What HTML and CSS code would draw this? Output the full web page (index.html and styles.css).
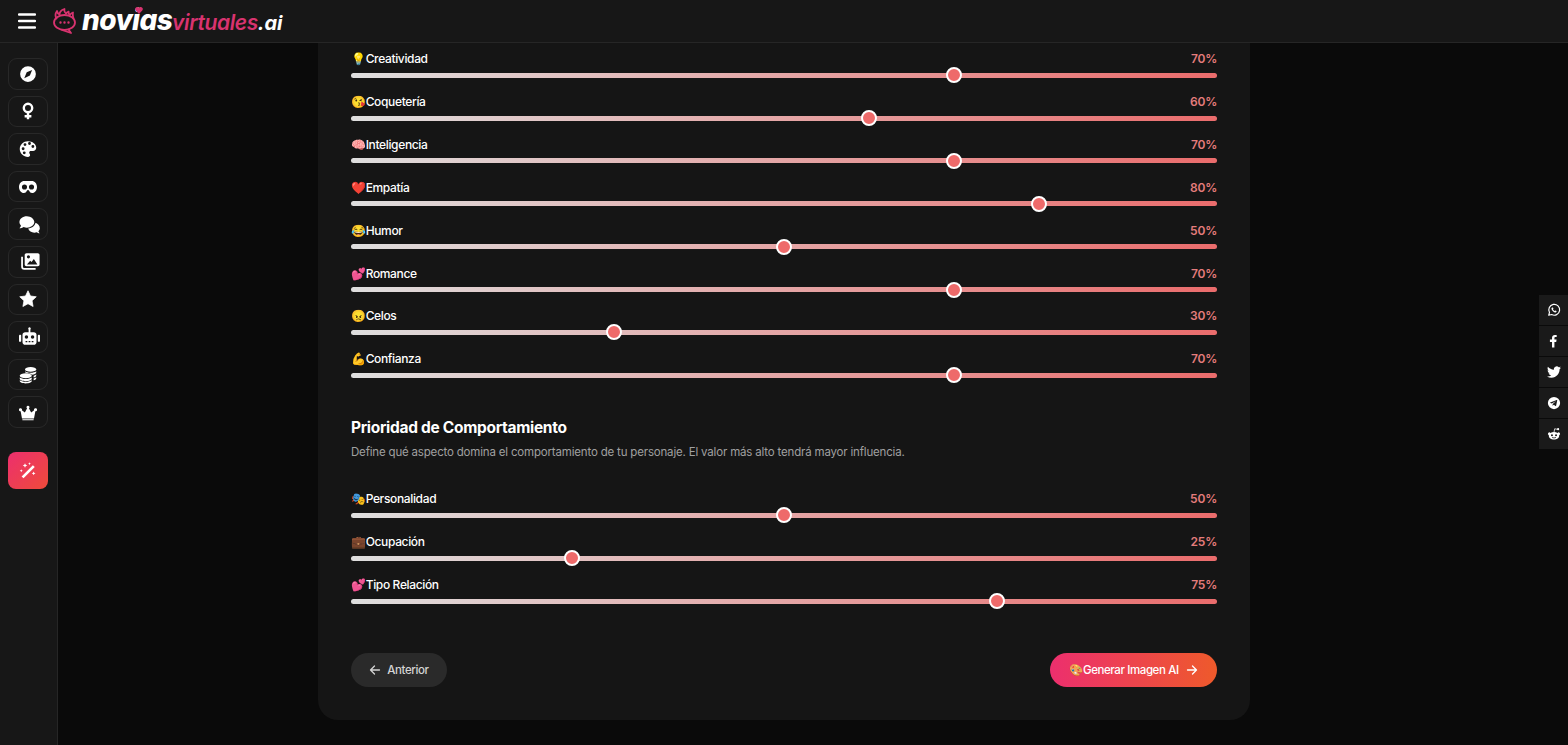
FILE: index.html
```html
<!doctype html>
<html lang="es">
  <head>
    <meta charset="UTF-8" />
    <meta name="viewport" content="width=device-width, initial-scale=1.0" />
    <title>Novias Virtuales AI</title>
    <link rel="stylesheet" href="styles.css">
  </head>
  <body>
    <header class="topbar">
      <button class="menu-btn" aria-label="Menú">
        <svg viewBox="0 0 18 16" width="18" height="16"><path d="M1 1.500h16M1 8h16M1 14.500h16" stroke="#fff" stroke-width="2.4" stroke-linecap="round"/></svg>
      </button>
      <a class="logo" href="#">
        <svg class="logo-mark" viewBox="0 0 26 26" width="26" height="26" fill="none" stroke="#d8336f" stroke-width="1.8" stroke-linejoin="round" stroke-linecap="round">
          <path d="M4.500 10.500C3 8 3.500 5 5 3c.3 2 1.200 3 2.500 3.500C7.500 4.500 9.500 2 12.500 1c-.5 2 .3 3.600 1.500 4.600.6-1 1.400-1.600 2.600-2-.2 1.400.3 2.400 1.200 3.400.8-1 1.900-2 3.200-2.500-.4 2-.2 3.700.5 5.700"/>
          <ellipse cx="12.500" cy="14.500" rx="10.500" ry="7.500"/>
          <path d="M10 22l9 3-2.500-3.500"/>
          <path d="M8.500 14.500h.01M12.500 14.500h.01M16.500 14.500h.01" stroke-width="2.400"/>
        </svg>
        <span class="logo-main">novias<svg class="logo-heart" viewBox="0 0 10 9" width="8" height="7"><path d="M5 9L.8 4.600C-.8 2.800.4 0 2.700 0 3.800 0 4.500.6 5 1.400 5.500.6 6.200 0 7.300 0c2.300 0 3.500 2.800 1.900 4.600z"/></svg></span><span class="logo-sub">virtuales</span><span class="logo-tld">.ai</span>
      </a>
    </header>

    <nav class="sidebar">
      <a class="nav-btn" href="#"><svg viewBox="0 0 24 24"><path fill-rule="evenodd" d="M12 1.500a10.500 10.500 0 1 0 0 21 10.500 10.500 0 0 0 0-21zM17.500 6.500l-3 7.500-7.500 3.500 3.300-7.700z"/></svg></a>
      <a class="nav-btn" href="#"><svg viewBox="0 0 24 24"><circle cx="12" cy="8" r="5.600" fill="none" stroke="#fff" stroke-width="3.200"/><path d="M12 14v9M7.500 19h9" stroke="#fff" stroke-width="3.200" fill="none"/></svg></a>
      <a class="nav-btn" href="#"><svg viewBox="0 0 24 24"><path fill-rule="evenodd" d="M12 1.500C6 1.500 1 6.200 1 12s5 10.500 11 10.500c1.800 0 2.800-1.100 2.800-2.500 0-1.800-1.200-2.200-1.200-3.500 0-1.200.9-2 2.100-2h3c2.400 0 4.300-1.900 4.300-4.300C23 5.300 18 1.500 12 1.500zM5.500 13.500a1.900 1.900 0 1 0 0-3.800 1.900 1.900 0 0 0 0 3.800zM8 8a1.900 1.900 0 1 0 0-3.800A1.900 1.900 0 0 0 8 8zM14 6.500a1.900 1.900 0 1 0 0-3.800 1.900 1.900 0 0 0 0 3.800zM18.500 10.500a1.900 1.900 0 1 0 0-3.800 1.900 1.900 0 0 0 0 3.800zM7 19a1.900 1.900 0 1 0 0-3.800A1.900 1.900 0 0 0 7 19z"/></svg></a>
      <a class="nav-btn" href="#"><svg viewBox="0 0 24 24"><path fill-rule="evenodd" d="M7 4h10c3.900 0 7 3.500 7 8s-3 8-6.300 8c-2.700 0-3.700-1.800-4.400-3.300-.5-1-2.100-1-2.600 0C10 18.200 9 20 6.300 20 3 20 0 16.500 0 12s3.100-8 7-8zM7.300 8.500a3.400 3.400 0 1 0 0 6.800 3.400 3.400 0 0 0 0-6.800zM16.700 8.500a3.400 3.400 0 1 0 0 6.800 3.400 3.400 0 0 0 0-6.800z"/></svg></a>
      <a class="nav-btn wide" href="#"><svg viewBox="0 0 24 24"><path d="M9 2.500C4.300 2.500.5 5.500.5 9.200c0 1.600.7 3 1.800 4.200-.4 1.300-1.300 2.300-1.800 2.900 1.800 0 3.500-.6 4.800-1.400 1.100.4 2.400.7 3.700.7 4.700 0 8.500-3 8.500-6.400S13.700 2.500 9 2.500z"/><path d="M18.800 9.500c0 3.800-3.800 6.800-8.300 7.100.9 2.800 3.700 4.700 7 4.700 1 0 1.800-.2 2.600-.4.900.6 2.200 1.100 3.600 1.100-.5-.5-1.200-1.400-1.500-2.400 1-.9 1.600-2.100 1.600-3.400 0-2.900-2.400-5.300-5.200-6.200z"/></svg></a>
      <a class="nav-btn wide" href="#"><svg viewBox="0 0 24 24"><path fill-rule="evenodd" d="M8.500 2.500h13c1.100 0 2 .9 2 2v11c0 1.100-.9 2-2 2h-13c-1.100 0-2-.9-2-2v-11c0-1.100.9-2 2-2zM9 15.500h12l-4-6.500-2.700 3.600-1.500-1.600zM10.800 8.500a1.800 1.800 0 1 0 0-3.600 1.800 1.800 0 0 0 0 3.600z"/><path d="M3.500 6.500V18c0 1.400 1.100 2.500 2.500 2.500h13" fill="none" stroke="#fff" stroke-width="2"/></svg></a>
      <a class="nav-btn" href="#"><svg viewBox="0 0 24 24"><path d="M12 1l3.300 7 7.700 1-5.600 5.300 1.400 7.700L12 18.300 5.200 22l1.400-7.700L1 9l7.700-1z" stroke="#fff" stroke-width="1" stroke-linejoin="round"/></svg></a>
      <a class="nav-btn wide" href="#"><svg viewBox="0 0 24 24"><path fill-rule="evenodd" d="M12 1.500a1.500 1.500 0 0 1 1 2.600V7h4c1.700 0 3 1.300 3 3v8.500c0 1.700-1.300 3-3 3H7c-1.700 0-3-1.300-3-3V10c0-1.700 1.300-3 3-3h4V4.100a1.500 1.500 0 0 1 1-2.600zM8.500 10.500a2 2 0 1 0 0 4 2 2 0 0 0 0-4zM15.500 10.500a2 2 0 1 0 0 4 2 2 0 0 0 0-4zM7.500 17v1.500h2V17zM11 17v1.500h2V17zM14.500 17v1.500h2V17z"/><rect x="0" y="10" width="2.500" height="8" rx="1"/><rect x="21.500" y="10" width="2.500" height="8" rx="1"/></svg></a>
      <a class="nav-btn" href="#"><svg viewBox="0 0 24 24"><ellipse cx="15.500" cy="4.500" rx="7.500" ry="3.200"/><path d="M23 7v1.500c0 1.500-2.500 2.800-5.800 3.100-1-.9-2.600-1.600-4.600-1.900C10 9.300 8 8.800 8 7.500V7c1.500 1.300 4.400 2 7.500 2S21.500 8.300 23 7zM23 11v1.500c0 1.300-1.600 2.300-3.500 2.900v-2.400c1.400-.3 2.700-.8 3.500-2zM23 15v1.300c0 1.200-1.300 2.200-3.500 2.700v-2.400c1.400-.3 2.700-.9 3.500-1.600z"/><ellipse cx="9" cy="13" rx="8" ry="3.300"/><path d="M1 15.300c1.500 1.200 4.500 2 8 2s6.500-.8 8-2V17c0 1.800-3.600 3.200-8 3.200S1 18.800 1 17z"/><path d="M1 19c1.500 1.200 4.500 2 8 2s6.500-.8 8-2v1c0 1.800-3.600 3.200-8 3.200S1 21.800 1 20z"/></svg></a>
      <a class="nav-btn" href="#"><svg viewBox="0 0 24 24"><path d="M12 3.500a2 2 0 0 1 1.200 3.600l3 5.400 4-2.800a2 2 0 1 1 1.600 1.200L20 20.500H4L2.200 10.900a2 2 0 1 1 1.600-1.200l4 2.800 3-5.400A2 2 0 0 1 12 3.500zM4.500 21.500h15V23h-15z"/></svg></a>
      <a class="nav-btn magic" href="#"><svg viewBox="0 0 24 24"><path d="M18.500 5.500l2.500 2.500L6 23l-2.500-2.500z"/><path d="M8 3l.9 2.100L11 6l-2.100.9L8 9l-.9-2.100L5 6l2.100-.9zM19.500 14l.8 1.700 1.700.8-1.700.8-.8 1.700-.8-1.700-1.700-.8 1.700-.8zM14 1.500l.6 1.400 1.400.6-1.400.6L14 5.500l-.6-1.400-1.400-.6 1.400-.6zM3 11l.6 1.400 1.400.6-1.400.6L3 15l-.6-1.400L1 13l1.400-.6z"/></svg></a>
    </nav>

    <main class="content">
      <section class="card">
        <div class="slider-group">
          <div class="slider-row">
            <div class="slider-head"><label>💡Creatividad</label><span class="slider-value">70%</span></div>
            <input type="range" min="0" max="100" value="70">
          </div>
          <div class="slider-row">
            <div class="slider-head"><label>😘Coquetería</label><span class="slider-value">60%</span></div>
            <input type="range" min="0" max="100" value="60">
          </div>
          <div class="slider-row">
            <div class="slider-head"><label>🧠Inteligencia</label><span class="slider-value">70%</span></div>
            <input type="range" min="0" max="100" value="70">
          </div>
          <div class="slider-row">
            <div class="slider-head"><label>❤️Empatía</label><span class="slider-value">80%</span></div>
            <input type="range" min="0" max="100" value="80">
          </div>
          <div class="slider-row">
            <div class="slider-head"><label>😂Humor</label><span class="slider-value">50%</span></div>
            <input type="range" min="0" max="100" value="50">
          </div>
          <div class="slider-row">
            <div class="slider-head"><label>💕Romance</label><span class="slider-value">70%</span></div>
            <input type="range" min="0" max="100" value="70">
          </div>
          <div class="slider-row">
            <div class="slider-head"><label>😠Celos</label><span class="slider-value">30%</span></div>
            <input type="range" min="0" max="100" value="30">
          </div>
          <div class="slider-row">
            <div class="slider-head"><label>💪Confianza</label><span class="slider-value">70%</span></div>
            <input type="range" min="0" max="100" value="70">
          </div>
        </div>

        <h3 class="section-title">Prioridad de Comportamiento</h3>
        <p class="section-text">Define qué aspecto domina el comportamiento de tu personaje. El valor más alto tendrá mayor influencia.</p>

        <div class="slider-group">
          <div class="slider-row">
            <div class="slider-head"><label>🎭Personalidad</label><span class="slider-value">50%</span></div>
            <input type="range" min="0" max="100" value="50">
          </div>
          <div class="slider-row">
            <div class="slider-head"><label>💼Ocupación</label><span class="slider-value">25%</span></div>
            <input type="range" min="0" max="100" value="25">
          </div>
          <div class="slider-row">
            <div class="slider-head"><label>💕Tipo Relación</label><span class="slider-value">75%</span></div>
            <input type="range" min="0" max="100" value="75">
          </div>
        </div>

        <div class="actions">
          <button class="btn btn-back">
            <svg viewBox="0 0 12 12" width="12" height="12"><path d="M10.500 6h-9M5.500 2l-4 4 4 4" fill="none" stroke="currentColor" stroke-width="1.300" stroke-linecap="round" stroke-linejoin="round"/></svg>
            Anterior
          </button>
          <button class="btn btn-next">
            <span>🎨Generar Imagen AI</span>
            <svg viewBox="0 0 12 12" width="12" height="12"><path d="M1.500 6h9M6.500 2l4 4-4 4" fill="none" stroke="currentColor" stroke-width="1.300" stroke-linecap="round" stroke-linejoin="round"/></svg>
          </button>
        </div>
      </section>
    </main>

    <aside class="share">
      <a href="#"><svg viewBox="0 0 24 24"><path d="M3 21l1.300-4.800A9.300 9.300 0 1 1 8 19.800z" fill="none" stroke="#fff" stroke-width="2" stroke-linejoin="round"/><path d="M9 7.500c-.8.300-1.500 1.200-1.300 2.500.4 2.600 3.400 5.700 6 6.200 1.300.2 2.300-.5 2.600-1.400l-.1-1-2-1-1 1c-1.200-.4-2.500-1.700-3-3l.9-1-.9-2.200z"/></svg></a>
      <a href="#"><svg viewBox="0 0 24 24"><path d="M15.800 13.500l.6-3.900h-3.700V7.300c0-1.100.5-2.100 2.200-2.100h1.700V1.900S15 1.600 13.600 1.600c-3.100 0-5 1.800-5 5v3H5v3.900h3.600V23h4.100v-9.500z"/></svg></a>
      <a href="#"><svg viewBox="0 0 24 24"><path d="M23.953 4.570a10 10 0 01-2.825.775 4.958 4.958 0 002.163-2.723c-.951.555-2.005.959-3.127 1.184a4.920 4.920 0 00-8.384 4.482C7.690 8.095 4.067 6.130 1.640 3.162a4.822 4.822 0 00-.666 2.475c0 1.710.870 3.213 2.188 4.096a4.904 4.904 0 01-2.228-.616v.060a4.923 4.923 0 003.946 4.827 4.996 4.996 0 01-2.212.085 4.936 4.936 0 004.604 3.417 9.867 9.867 0 01-6.102 2.105c-.390 0-.779-.023-1.170-.067a13.995 13.995 0 007.557 2.209c9.053 0 13.998-7.496 13.998-13.985 0-.210 0-.420-.015-.630A9.935 9.935 0 0024 4.590z"/></svg></a>
      <a href="#"><svg viewBox="0 0 24 24"><path fill-rule="evenodd" d="M12 1.500a10.500 10.500 0 1 0 0 21 10.500 10.500 0 0 0 0-21zM17.500 7.500l-1.900 9.200c-.1.700-.6.800-1.100.5l-2.900-2.100-1.400 1.300c-.2.200-.3.300-.6.300l.2-2.900 5.300-4.800c.2-.2 0-.3-.3-.1l-6.500 4.100-2.800-.9c-.6-.2-.6-.6.100-.9l11-4.200c.5-.2 1 .1.900.5z"/></svg></a>
      <a href="#"><svg viewBox="0 0 24 24"><path fill-rule="evenodd" d="M12 8.500c2.400 0 4.500.6 6 1.700a2.500 2.500 0 1 1 2.800 4c0 .2.100.5.100.8 0 3.800-4 6.500-8.900 6.500S3.100 18.800 3.100 15c0-.3 0-.6.100-.8a2.500 2.500 0 1 1 2.800-4c1.500-1.100 3.600-1.700 6-1.700zM8.500 12.500a1.700 1.700 0 1 0 0 3.400 1.700 1.700 0 0 0 0-3.400zM15.500 12.500a1.700 1.700 0 1 0 0 3.400 1.700 1.700 0 0 0 0-3.400zM8.500 17.800c1 1 2.200 1.400 3.500 1.400s2.500-.4 3.500-1.400l-.8-.6c-.7.600-1.700 1-2.700 1s-2-.4-2.700-1z"/><path d="M12 9l1.200-6 4.300 1" fill="none" stroke="#fff" stroke-width="1.300"/><circle cx="19" cy="3.800" r="1.900"/></svg></a>
    </aside>
  </body>
</html>
```

FILE: styles.css
```css
* {
  margin: 0;
  padding: 0;
  box-sizing: border-box;
}

html,
body {
  height: 100%;
  overflow: hidden;
}

body {
  font-family: Inter, "Liberation Sans", sans-serif;
  background: #0a0a0a;
  color: #fff;
  display: flex;
  flex-direction: column;
}

a {
  color: inherit;
  text-decoration: none;
}

.topbar {
  height: 43px;
  flex-shrink: 0;
  display: flex;
  align-items: center;
  gap: 16px;
  padding-left: 18px;
  background: #171717;
  border-bottom: 1px solid #262626;
}

.menu-btn {
  display: flex;
  background: none;
  border: 0;
}

.logo {
  display: flex;
  align-items: baseline;
  line-height: 26px;
  font-style: italic;
}

.logo-mark {
  align-self: center;
  margin-right: 4px;
}

.logo-main {
  position: relative;
  font-size: 28px;
  font-weight: 800;
  letter-spacing: -0.6px;
}

.logo-heart {
  position: absolute;
  left: 53px;
  top: 0;
  fill: #d8336f;
}

.logo-sub {
  font-size: 21px;
  font-weight: 600;
  letter-spacing: -0.4px;
  color: #d8336f;
}

.logo-tld {
  font-size: 20px;
  font-weight: 700;
}

/* sidebar is fixed, the card centres on the whole window */
.sidebar {
  position: fixed;
  top: 43px;
  left: 0;
  bottom: 0;
  width: 58px;
  display: flex;
  flex-direction: column;
  gap: 6px;
  padding: 15px 0 0 8px;
  background: #171717;
  border-right: 1px solid #262626;
}

.nav-btn {
  width: 40px;
  height: 31.6px;
  flex-shrink: 0;
  display: flex;
  align-items: center;
  justify-content: center;
  border: 1px solid #282828;
  border-radius: 9px;
}

.nav-btn svg {
  width: 18px;
  height: 18px;
  fill: #fff;
}

.nav-btn.wide svg {
  width: 21px;
  height: 21px;
  margin-left: 2px;
}

.nav-btn.magic {
  height: 37px;
  margin-top: 18px;
  border: 0;
  border-radius: 8px;
  background: linear-gradient(135deg, #ec2f6e, #ef4b3a);
}

.content {
  flex: 1;
  min-height: 0;
  display: flex;
  flex-direction: column;
  align-items: center;
  justify-content: flex-end;
  overflow: hidden;
  padding-bottom: 25px;
}

.card {
  width: 932px;
  flex-shrink: 0;
  padding: 33px;
  background: #151515;
  border-radius: 20px;
}

.slider-group {
  display: flex;
  flex-direction: column;
  gap: 9.86px;
}

.slider-head {
  height: 17px;
  display: flex;
  align-items: center;
  justify-content: space-between;
  font-size: 12px;
  line-height: 17px;
}

.slider-head label {
  font-weight: 500;
  letter-spacing: -0.35px;
}

.slider-value {
  font-weight: 600;
  letter-spacing: -0.2px;
  color: #e47c7c;
}

input[type="range"] {
  display: block;
  width: 100%;
  height: 16px;
  background: transparent;
  -webkit-appearance: none;
  appearance: none;
}

input[type="range"]::-webkit-slider-runnable-track {
  height: 5px;
  border-radius: 3px;
  background: linear-gradient(to right, #dedede, #ea6c6c);
}

input[type="range"]::-webkit-slider-thumb {
  -webkit-appearance: none;
  width: 16px;
  height: 16px;
  margin-top: -5.5px;
  border: 2.5px solid #fff;
  border-radius: 50%;
  background: #ee6a6a;
}

.section-title {
  margin-top: 33px;
  font-size: 15.5px;
  line-height: 24px;
  font-weight: 700;
  letter-spacing: -0.3px;
}

.section-text {
  margin: 4px 0 30px;
  font-size: 11.5px;
  line-height: 16px;
  letter-spacing: -0.18px;
  color: #a0a0a0;
}

.actions {
  display: flex;
  justify-content: space-between;
  margin-top: 44px;
}

.btn {
  height: 34px;
  display: inline-flex;
  align-items: center;
  justify-content: center;
  border: 0;
  border-radius: 17px;
  font-family: inherit;
  font-size: 11.5px;
  font-weight: 500;
  letter-spacing: -0.4px;
}

.btn-back {
  width: 96px;
  gap: 6px;
  background: #2a2a2a;
  color: #d4d4d4;
}

.btn-next {
  width: 167px;
  gap: 7px;
  background: linear-gradient(90deg, #ec2f6e, #ee5a2b);
  color: #fff;
}

.share {
  position: fixed;
  right: 0;
  top: 295px;
  width: 29px;
  display: flex;
  flex-direction: column;
  gap: 1px;
}

.share a {
  height: 30px;
  display: flex;
  align-items: center;
  justify-content: center;
  background: #1a1a1a;
}

.share svg {
  width: 14px;
  height: 14px;
  fill: #fff;
}
```
